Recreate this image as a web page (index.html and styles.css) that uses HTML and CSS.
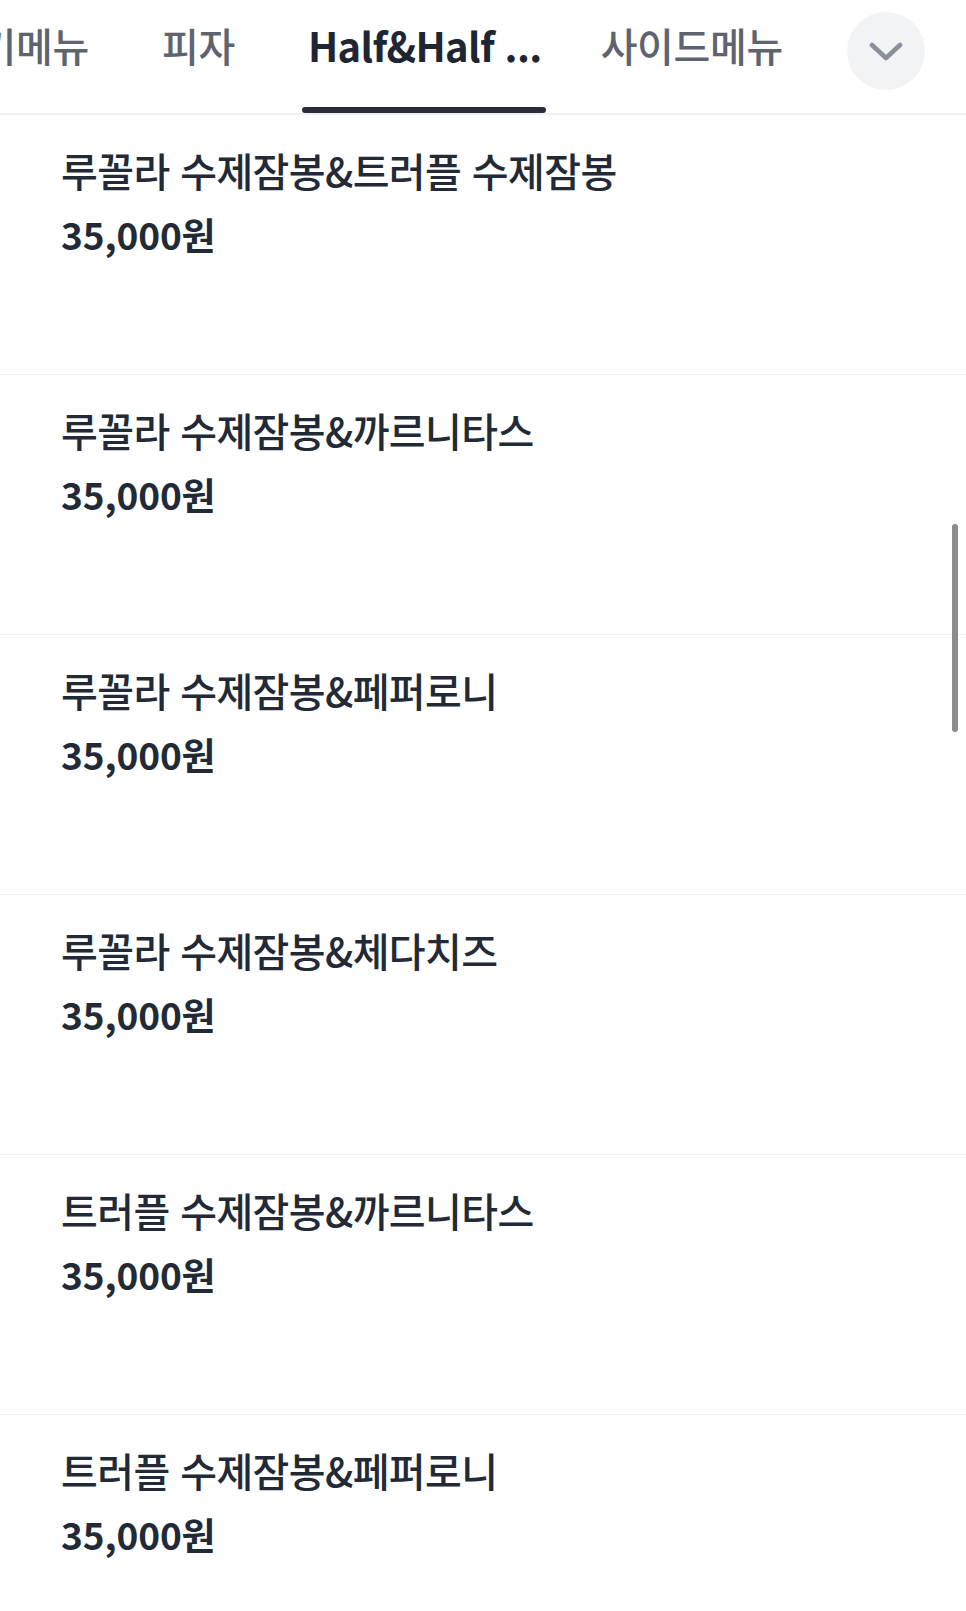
FILE: index.html
```html
<!DOCTYPE html>
<html lang="ko">
<head>
<meta charset="utf-8">
<title>메뉴</title>
<link rel="stylesheet" href="styles.css">
</head>
<body>
<div class="page">
  <header class="tabs">
    <nav class="tab-strip">
      <span class="tab tab-cut">인기메뉴</span>
      <span class="tab">피자</span>
      <span class="tab tab-active">Half&amp;Half ...</span>
      <span class="tab tab-side">사이드메뉴</span>
    </nav>
    <button class="more" type="button" aria-label="전체 카테고리">
      <svg width="34" height="20" viewBox="0 0 34 20"><path d="M3 3 L17 16 L31 3" fill="none" stroke="#8a8f99" stroke-width="4.6" stroke-linecap="round" stroke-linejoin="round"/></svg>
    </button>
  </header>
  <main class="list">
    <div class="item"><div class="item-name">루꼴라 수제잠봉&amp;트러플 수제잠봉</div><div class="item-price">35,000원</div></div>
    <div class="item"><div class="item-name">루꼴라 수제잠봉&amp;까르니타스</div><div class="item-price">35,000원</div></div>
    <div class="item"><div class="item-name">루꼴라 수제잠봉&amp;페퍼로니</div><div class="item-price">35,000원</div></div>
    <div class="item"><div class="item-name">루꼴라 수제잠봉&amp;체다치즈</div><div class="item-price">35,000원</div></div>
    <div class="item"><div class="item-name">트러플 수제잠봉&amp;까르니타스</div><div class="item-price">35,000원</div></div>
    <div class="item"><div class="item-name">트러플 수제잠봉&amp;페퍼로니</div><div class="item-price">35,000원</div></div>
  </main>
  <div class="scrollbar"></div>
</div>
</body>
</html>
```

FILE: styles.css
```css
* { box-sizing: border-box; }
html, body {
  margin: 0;
  padding: 0;
  background: #ffffff;
}
body {
  font-family: "Noto Sans CJK KR", "Noto Sans", sans-serif;
  color: #222a37;
}
.page {
  position: relative;
  width: 966px;
  height: 1611px;
  overflow: hidden;
}
.tabs {
  display: flex;
  height: 115px;
  border-bottom: 2px solid #f0f1f3;
}
.tab-strip {
  display: flex;
  flex: 1;
  gap: 61px;
  margin-left: -63px;
  overflow: hidden;
}
.tab {
  position: relative;
  flex: none;
  padding: 21px 6px 0;
  font-size: 40px;
  line-height: 48px;
  font-weight: 500;
  color: #5d6470;
  white-space: nowrap;
  letter-spacing: -0.3px;
}
.tab-active {
  color: #1f2633;
  font-weight: 700;
  letter-spacing: -0.7px;
  padding-right: 4px;
}
.tab-side {
  margin-left: -12px;
}
.tab-active::after {
  content: "";
  position: absolute;
  left: 0;
  right: 0;
  bottom: 0;
  height: 6px;
  border-radius: 3px;
  background: #262d3a;
}
.more {
  flex: none;
  width: 78px;
  height: 78px;
  margin: 12px 41px 0 20px;
  border: 0;
  border-radius: 50%;
  background: #f2f3f5;
  display: flex;
  align-items: center;
  justify-content: center;
  padding: 0;
}
.more svg { display: block; margin-top: 2px; }
.item {
  padding: 31px 0 116px 61px;
  border-bottom: 1px solid #eef0f2;
}
.item-name {
  font-size: 40px;
  line-height: 48px;
  font-weight: 500;
  letter-spacing: -0.6px;
  white-space: nowrap;
}
.item-price {
  margin-top: 16px;
  font-size: 37px;
  line-height: 48px;
  font-weight: 600;
  letter-spacing: -0.1px;
}
.scrollbar {
  position: absolute;
  right: 8px;
  top: 524px;
  width: 6px;
  height: 208px;
  border-radius: 3px;
  background: #8c8c8c;
}
```
